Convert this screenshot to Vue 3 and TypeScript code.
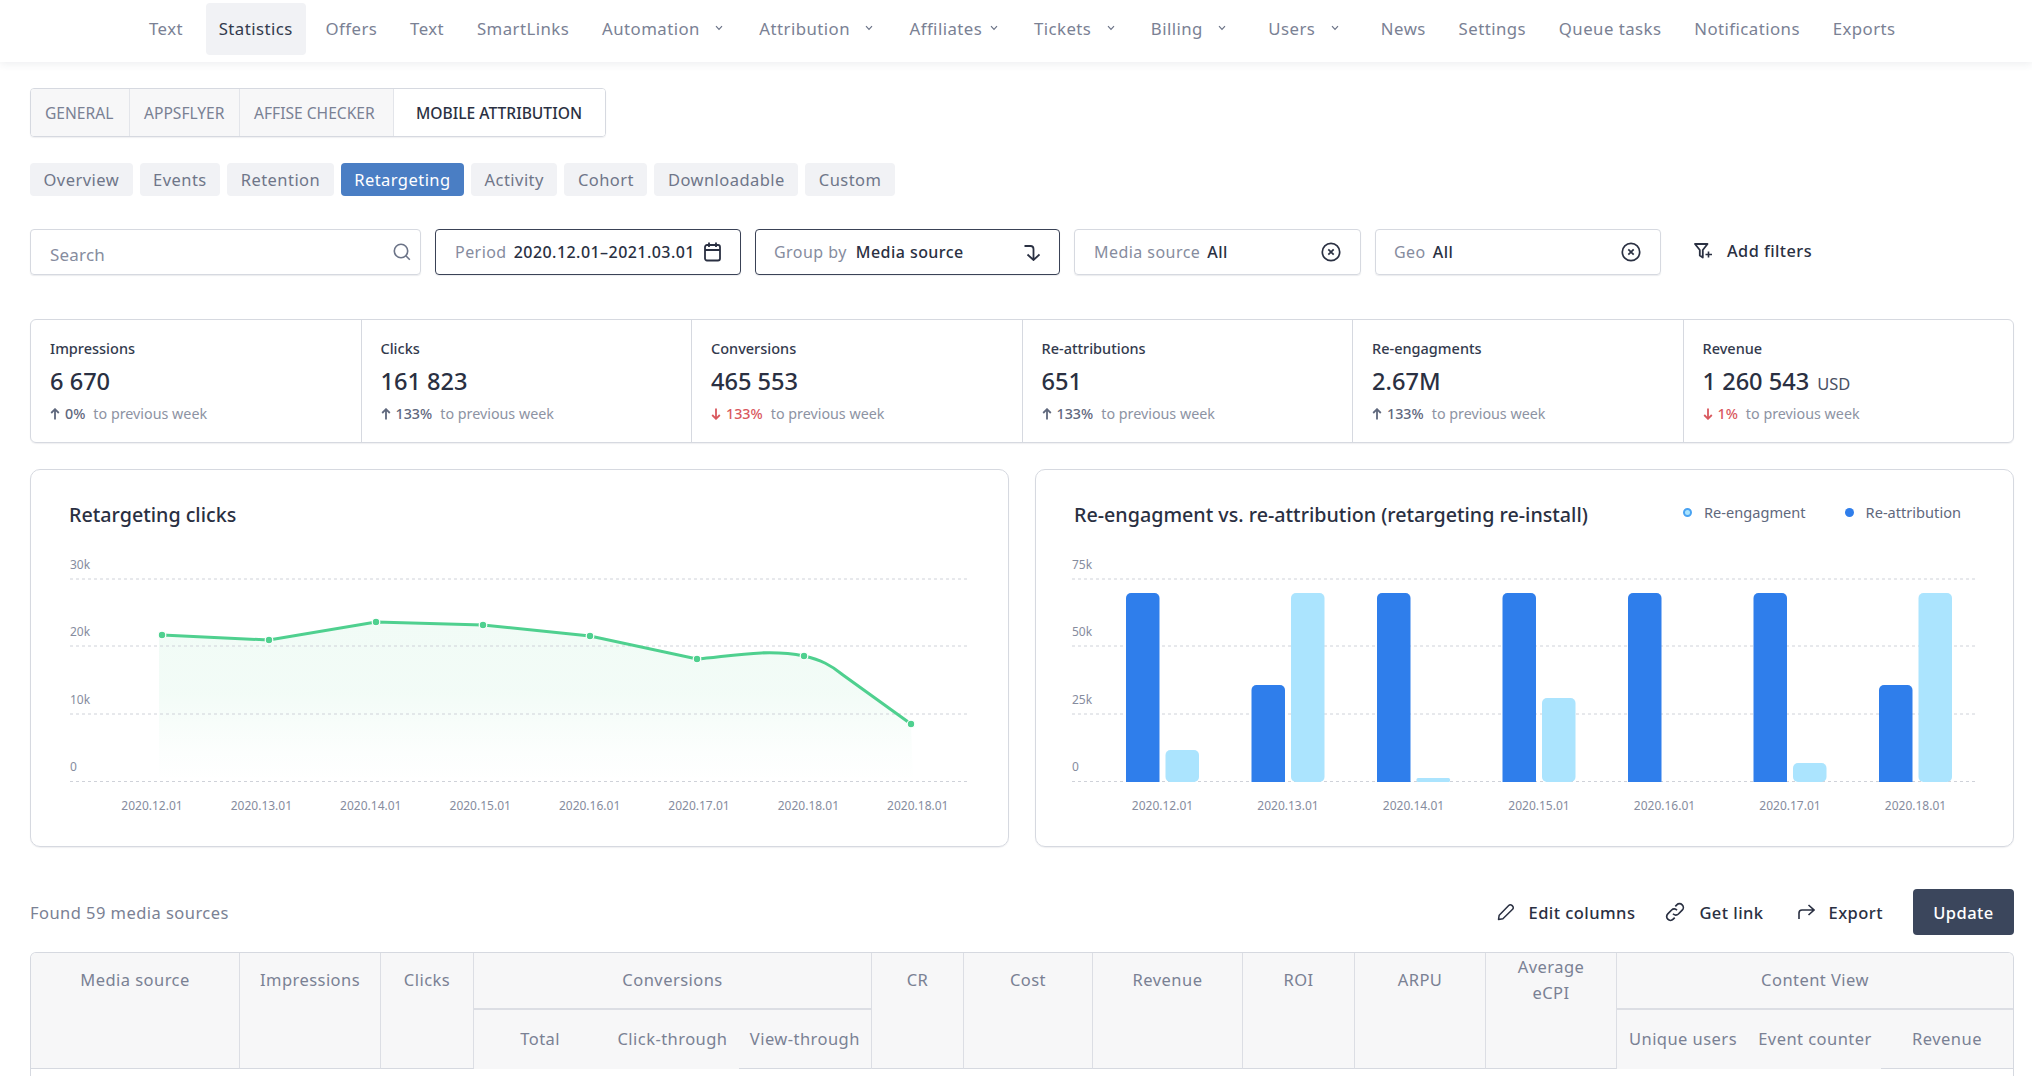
<script setup lang="ts">
interface NavItem { label: string; caret?: boolean; active?: boolean; tight?: boolean; wide?: boolean }
const nav: NavItem[] = [
  { label: 'Text' }, { label: 'Statistics', active: true }, { label: 'Offers' },
  { label: 'Text' }, { label: 'SmartLinks' }, { label: 'Automation', caret: true },
  { label: 'Attribution', caret: true }, { label: 'Affiliates', caret: true, tight: true },
  { label: 'Tickets', caret: true }, { label: 'Billing', caret: true, wide: true }, { label: 'Users', caret: true, wide: true },
  { label: 'News' }, { label: 'Settings' }, { label: 'Queue tasks' }, { label: 'Notifications' }, { label: 'Exports' },
]
const segs = ['GENERAL', 'APPSFLYER', 'AFFISE CHECKER']
const pills = ['Overview', 'Events', 'Retention', 'Retargeting', 'Activity', 'Cohort', 'Downloadable', 'Custom']
const stats = [
  { l: 'Impressions', v: '6 670', p: '0%', up: true },
  { l: 'Clicks', v: '161 823', p: '133%', up: true },
  { l: 'Conversions', v: '465 553', p: '133%', up: false },
  { l: 'Re-attributions', v: '651', p: '133%', up: true },
  { l: 'Re-engagments', v: '2.67M', p: '133%', up: true },
  { l: 'Revenue', v: '1 260 543', u: 'USD', p: '1%', up: false },
]
const lineX = [131, 238, 345, 452, 559, 666, 773, 880]
const lineY = [165, 170, 152, 155, 166, 189, 186, 254]
const gridY = [109, 176, 244, 311.5]
const lineDates = ['2020.12.01', '2020.13.01', '2020.14.01', '2020.15.01', '2020.16.01', '2020.17.01', '2020.18.01', '2020.18.01']
const linePath = 'M131 165 L238 170 L345 152 L452 155 L559 166 L666 189 C695 187 735 178 773 186 C790 190 800 195 812 205 L880 254'
const areaPath = linePath + ' L882 311 L128 311 L128 165 Z'
const bars = [
  { d: '2020.12.01', a: 189, b: 32 }, { d: '2020.13.01', a: 97, b: 189 }, { d: '2020.14.01', a: 189, b: 4 },
  { d: '2020.15.01', a: 189, b: 84 }, { d: '2020.16.01', a: 189, b: 0 }, { d: '2020.17.01', a: 189, b: 19 }, { d: '2020.18.01', a: 97, b: 189 },
]
</script>

<template>
  <div class="page">
    <header class="topbar">
      <nav class="nav">
        <a v-for="(n, i) in nav" :key="i" class="nav-item" :class="{ on: n.active, tight: n.tight, wide: n.wide }">
          {{ n.label }}
          <svg v-if="n.caret" class="caret" width="8" height="6" viewBox="0 0 8 6"><path d="M1 1.200 4 4.400 7 1.200" fill="none" stroke="#6b7387" stroke-width="1.200"/></svg>
        </a>
      </nav>
    </header>

    <main class="main">
      <div class="seg">
        <span v-for="s in segs" :key="s" class="seg-i">{{ s }}</span>
        <span class="seg-on">MOBILE ATTRIBUTION</span>
      </div>

      <div class="pills">
        <span v-for="p in pills" :key="p" class="pill" :class="{ on: p === 'Retargeting' }">{{ p }}</span>
      </div>

      <div class="filters">
        <div class="fld f-search">
          <span class="lab search-t">Search</span>
          <svg width="18" height="18" viewBox="0 0 18 18" class="ic-end"><circle cx="8" cy="8" r="6.700" fill="none" stroke="#6b7387" stroke-width="1.600"/><path d="M12.800 12.800 16.800 16.800" stroke="#6b7387" stroke-width="1.600" fill="none"/></svg>
        </div>
        <div class="fld f-dark f-period">
          <span class="lab">Period</span><span class="val">2020.12.01–2021.03.01</span>
          <svg width="17" height="20" viewBox="0 0 17 20" class="ic-end"><rect x="1" y="3" width="15" height="15.500" rx="2" fill="none" stroke="#2a3042" stroke-width="1.800"/><path d="M1 8h15M5 .5v4.500M12 .5v4.500" stroke="#2a3042" stroke-width="1.800" fill="none"/></svg>
        </div>
        <div class="fld f-dark f-group">
          <span class="lab">Group by</span><span class="val">Media source</span>
          <svg width="16" height="17" viewBox="0 0 16 17" class="ic-end"><path d="M.5 2h6a3 3 0 0 1 3 3v10.500M3.500 10.500l6 5.500 6-5.500" fill="none" stroke="#2a3042" stroke-width="1.800"/></svg>
        </div>
        <div class="fld f-media">
          <span class="lab">Media source</span><span class="val">All</span>
          <svg width="20" height="20" viewBox="0 0 20 20" class="ic-end"><circle cx="10" cy="10" r="8.700" fill="none" stroke="#2a3042" stroke-width="1.700"/><path d="M7.300 7.300l5.400 5.400M12.700 7.300l-5.400 5.400" stroke="#2a3042" stroke-width="1.700"/></svg>
        </div>
        <div class="fld f-geo">
          <span class="lab">Geo</span><span class="val">All</span>
          <svg width="20" height="20" viewBox="0 0 20 20" class="ic-end"><circle cx="10" cy="10" r="8.700" fill="none" stroke="#2a3042" stroke-width="1.700"/><path d="M7.300 7.300l5.400 5.400M12.700 7.300l-5.400 5.400" stroke="#2a3042" stroke-width="1.700"/></svg>
        </div>
        <div class="add">
          <svg width="19" height="16" viewBox="0 0 19 16"><path d="M1 1h12.500L8.800 7v7.500L5.800 12.500V7z" fill="none" stroke="#2a3042" stroke-width="1.800" stroke-linejoin="round"/><path d="M14.500 8.500v6M11.500 11.500h6.500" stroke="#2a3042" stroke-width="1.600"/></svg>
          <span>Add filters</span>
        </div>
      </div>

      <section class="stats">
        <div v-for="s in stats" :key="s.l" class="stat">
          <div class="st-l">{{ s.l }}</div>
          <div class="st-v">{{ s.v }}<span v-if="s.u" class="st-u">{{ s.u }}</span></div>
          <div class="st-d">
            <svg width="10" height="12" viewBox="0 0 10 12"><path :d="s.up ? 'M5 11.500V1.500M1.200 5 5 1.200 8.800 5' : 'M5 .5v10M1.200 7 5 10.800 8.800 7'" fill="none" :stroke="s.up ? '#5f687d' : '#d9585e'" stroke-width="1.800"/></svg>
            <b :class="{ red: !s.up }">{{ s.p }}</b><span>to previous week</span>
          </div>
        </div>
      </section>

      <section class="charts">
        <div class="card">
          <div class="card-h"><h3>Retargeting clicks</h3></div>
          <svg class="plot" width="976" height="316" viewBox="0 60 976 316">
            <defs>
              <linearGradient id="ga" x1="0" y1="0" x2="0" y2="1">
                <stop offset="0" stop-color="#4fd08f" stop-opacity=".08"/>
                <stop offset=".45" stop-color="#4fd08f" stop-opacity=".07"/>
                <stop offset=".8" stop-color="#4fd08f" stop-opacity=".02"/>
                <stop offset="1" stop-color="#4fd08f" stop-opacity="0"/>
              </linearGradient>
            </defs>
            <text v-for="(t, i) in ['30k','20k','10k','0']" :key="t" x="39" :y="gridY[i] - 10.500" class="ax">{{ t }}</text>
            <path :d="areaPath" fill="url(#ga)"/>
            <line v-for="y in gridY" :key="y" x1="39" x2="939" :y1="y" :y2="y" class="gl"/>
            <path :d="linePath" fill="none" stroke="#4fd08f" stroke-width="3"/>
            <circle v-for="(x, i) in lineX" :key="i" :cx="x" :cy="lineY[i]" r="3.800" fill="#4fd08f" stroke="#fff" stroke-width="1.200"/>
            <text v-for="(d, i) in lineDates" :key="i" :x="121 + i * 109.400" y="340" text-anchor="middle" class="ax">{{ d }}</text>
          </svg>
        </div>
        <div class="card">
          <div class="card-h">
            <h3>Re-engagment vs. re-attribution (retargeting re-install)</h3>
            <div class="legend">
              <span class="lg"><i class="dot ring"></i>Re-engagment</span>
              <span class="lg"><i class="dot"></i>Re-attribution</span>
            </div>
          </div>
          <svg class="plot" width="976" height="316" viewBox="0 60 976 316">
            <text v-for="(t, i) in ['75k','50k','25k','0']" :key="t" x="36" :y="gridY[i] - 10.500" class="ax">{{ t }}</text>
            <line v-for="y in gridY" :key="y" x1="36" x2="939" :y1="y" :y2="y" class="gl"/>
            <g v-for="(b, i) in bars" :key="i">
              <path :d="`M${90 + i * 125.500} 312 v${-b.a + 5} a5 5 0 0 1 5 -5 h23.500 a5 5 0 0 1 5 5 v${b.a - 5} z`" fill="#2f7eeb"/>
              <rect v-if="b.b" :x="129.500 + i * 125.500" :y="312 - b.b" width="33.500" :height="b.b" :rx="b.b > 10 ? 5 : 1.500" fill="#abe4fe"/>
              <text :x="126.500 + i * 125.500" y="340" text-anchor="middle" class="ax">{{ b.d }}</text>
            </g>
          </svg>
        </div>
      </section>

      <div class="toolbar">
        <span class="found">Found 59 media sources</span>
        <div class="acts">
          <span class="act act-edit">
            <svg width="18" height="18" viewBox="0 0 18 18"><path d="M1.500 16.500l.7-4.300L11.700 2.400c.9-.9 2.300-.9 3.200 0l.7.7c.9.9.9 2.300 0 3.200L5.900 15.800z" fill="none" stroke="#2a3042" stroke-width="1.500" stroke-linejoin="round"/></svg>
            Edit columns
          </span>
          <span class="act">
            <svg width="20" height="20" viewBox="0 0 20 20"><path d="M8 11.800a3.800 3.800 0 0 0 5.400.2l3.800-3.800a3.800 3.800 0 0 0-5.400-5.400L10.300 4.300M12 8.200a3.800 3.800 0 0 0-5.400-.2L2.800 11.800a3.800 3.800 0 0 0 5.400 5.400l1.500-1.500" fill="none" stroke="#2a3042" stroke-width="1.700"/></svg>
            Get link
          </span>
          <span class="act act-last">
            <svg width="17" height="16" viewBox="0 0 17 16"><path d="M1 15V9a3 3 0 0 1 3-3h11.500M10.500 1l5.500 5-5.500 5" fill="none" stroke="#2a3042" stroke-width="1.600"/></svg>
            Export
          </span>
          <button class="upd">Update</button>
        </div>
      </div>

      <div class="table">
        <div class="thead">
          <div class="th c1">Media source</div>
          <div class="th c2">Impressions</div>
          <div class="th c3">Clicks</div>
          <div class="grp c4">
            <div class="grp-t">Conversions</div>
            <div class="grp-r">
              <span>Total</span><span>Click-through</span><span>View-through</span>
            </div>
          </div>
          <div class="th c5">CR</div>
          <div class="th c6">Cost</div>
          <div class="th c7">Revenue</div>
          <div class="th c8">ROI</div>
          <div class="th c9">ARPU</div>
          <div class="th c10">Average<br>eCPI</div>
          <div class="grp c11">
            <div class="grp-t">Content View</div>
            <div class="grp-r">
              <span>Unique users</span><span>Event counter</span><span>Revenue</span>
            </div>
          </div>
        </div>
      </div>
    </main>
  </div>
</template>

<style>
html, body { margin: 0; background: #fff; overflow: hidden; }
</style>

<style scoped>
.page { width: 2032px; height: 1076px; overflow: hidden; font-family: "Noto Sans", "Open Sans", sans-serif; color: #2a3042; font-size: 16.500px; letter-spacing: .45px; background: #fff; }
.topbar { height: 62px; box-sizing: border-box; box-shadow: 0 2px 8px rgba(60, 70, 90, .09); }
.nav { display: flex; padding: 3px 0 0 136px; }
.nav-item { display: flex; align-items: center; box-sizing: border-box; padding: 0 13px 2px; height: 52px; color: #7a8194; white-space: nowrap; border-radius: 4px; margin-right: 6.800px; font-size: 16.800px; }
.nav-item:first-child { margin-right: 9.600px; }
.nav-item.on { background: #f1f2f5; color: #333a4d; }
.caret { margin-left: 15.400px; margin-right: 3.300px; }
.tight .caret { margin-left: 7.600px; }
.wide { margin-right: 12.800px; }
.main { padding: 26px 18px 0 30px; }
.seg { display: flex; width: fit-content; height: 49px; box-sizing: border-box; border: 1px solid #d6d9e0; border-radius: 4px; overflow: hidden; box-shadow: 0 1px 1px rgba(60,70,90,.08); font-size: 15.600px; letter-spacing: 0; }
.seg-i { display: flex; align-items: center; box-sizing: border-box; padding-left: 14px; background: #f7f7f8; color: #7a8194; border-right: 1px solid #e3e5ea; white-space: nowrap; }
.seg-i:nth-child(1) { width: 99px; }
.seg-i:nth-child(2) { width: 110px; }
.seg-i:nth-child(3) { width: 154px; }
.seg-on { display: flex; align-items: center; background: #fff; color: #2a3042; padding: 0 23px 0 22px; font-weight: 500; white-space: nowrap; }
.pills { display: flex; gap: 7px; margin-top: 26px; }
.pill { display: flex; align-items: center; height: 33px; padding: 0 13.500px; background: #f1f2f5; color: #6f7689; border-radius: 4px; }
.pill.on { background: #4a7ec4; color: #fff; }
.filters { display: flex; gap: 14px; margin-top: 33px; height: 46px; font-size: 16px; }
.fld { display: flex; align-items: center; box-sizing: border-box; padding: 0 19px 0 19px; border: 1px solid #d6d9e0; border-radius: 4px; box-shadow: 0 1px 1px rgba(60,70,90,.1); }
.f-dark { border-color: #3a4256; }
.f-search { width: 391px; padding-right: 9px; }
.f-period { width: 306px; }
.f-group { width: 305px; padding-left: 18px; }
.f-media { width: 287px; }
.f-geo { width: 286px; padding-left: 18px; }
.lab { color: #868c9e; margin-right: 7px; white-space: nowrap; }
.f-group .lab { margin-right: 9px; }
.search-t { padding-top: 5px; font-size: 17px; letter-spacing: .2px; }
.val { color: #2a3042; font-weight: 500; white-space: nowrap; }
.ic-end { margin-left: auto; flex: none; }
.add { display: flex; align-items: center; gap: 14px; margin-left: 19px; padding-bottom: 2px; font-weight: 500; font-size: 16.300px; }
.stats { display: flex; margin-top: 44px; height: 124px; box-sizing: border-box; border: 1px solid #d6d9e0; border-radius: 6px; box-shadow: 0 1px 1px rgba(60,70,90,.08); letter-spacing: 0; }
.stat { flex: 1; padding: 18px 19px 0; border-right: 1px solid #d6d9e0; }
.stat:last-child { border-right: 0; }
.st-l { font-size: 14.500px; line-height: 20px; color: #333a4d; font-weight: 500; }
.st-v { font-size: 23.600px; line-height: 32px; margin-top: 7px; font-weight: 500; color: #2a3042; }
.st-u { font-size: 16.500px; line-height: 1; font-weight: 400; margin-left: 8px; color: #4a5164; }
.st-d { display: flex; align-items: center; font-size: 14.300px; line-height: 20px; margin-top: 7px; color: #8d93a3; }
.st-d svg { margin-right: 5px; }
.st-d b { font-weight: 500; color: #5f687d; margin-right: 8px; }
.st-d b.red { color: #d9585e; }
.charts { display: flex; gap: 26px; margin-top: 26px; }
.card { flex: 1; height: 378px; box-sizing: border-box; border: 1px solid #d6d9e0; border-radius: 10px; box-shadow: 0 1px 1px rgba(60,70,90,.08); overflow: hidden; letter-spacing: 0; }
.card-h { display: flex; justify-content: space-between; padding: 32px 52px 0 38px; height: 60px; box-sizing: border-box; }
h3 { margin: 0; font-size: 19.700px; line-height: 26px; font-weight: 500; color: #2a3042; white-space: nowrap; }
.plot { display: block; }
.ax { font-size: 12px; fill: #868c9e; font-family: "Noto Sans", sans-serif; }
.gl { stroke: #cfd2d9; stroke-width: 1; stroke-dasharray: 3 3; }
.legend { display: flex; gap: 39px; font-size: 14.600px; color: #5f687d; }
.lg { display: flex; align-items: center; height: 20px; white-space: nowrap; }
.dot { width: 9px; height: 9px; border-radius: 50%; background: #2f7eeb; margin-right: 12px; }
.dot.ring { background: #abe4fe; border: 2px solid #4aa3f2; box-sizing: border-box; }
.toolbar { display: flex; justify-content: space-between; align-items: center; margin-top: 42px; height: 46px; }
.found { color: #7a8194; }
.acts { display: flex; align-items: center; }
.act { display: flex; align-items: center; gap: 14px; font-weight: 500; margin-right: 34px; }
.act-edit { margin-right: 30px; }
.act-last { margin-right: 30px; }
.upd { width: 101px; height: 46px; border: 0; border-radius: 4px; background: #3b465c; color: #fff; font: 500 16.500px "Noto Sans", sans-serif; letter-spacing: .45px; }
.table { height: 125px; box-sizing: border-box; margin-top: 17px; border: 1px solid #d6d9e0; border-bottom: 0; border-radius: 6px 6px 0 0; color: #7a8194; overflow: hidden; }
.thead { display: flex; height: 116px; background: #f7f7f8; }
.th { box-sizing: border-box; padding-top: 14px; line-height: 26px; text-align: center; border-right: 1px solid #dcdee4; border-bottom: 1px solid #d6d9e0; flex: none; }
.c1 { width: 209px; } .c2 { width: 141px; } .c3 { width: 93px; } .c5 { width: 92px; } .c6 { width: 129px; } .c7 { width: 150px; } .c8 { width: 112px; } .c9 { width: 131px; }
.c10 { width: 131px; padding-top: 1px; line-height: 26px; }
.grp { flex: none; box-sizing: border-box; border-right: 1px solid #dcdee4; }
.c4 { width: 398px; }
.c11 { flex: 1; border-right: 0; }
.grp-t { height: 57px; line-height: 54px; text-align: center; border-bottom: 2px solid #dcdee4; box-sizing: border-box; }
.grp-r { display: flex; height: 59px; }
.grp-r span { flex: 1; display: flex; align-items: center; justify-content: center; white-space: nowrap; box-sizing: border-box; padding-bottom: 2px; }
.grp-r span:last-child { border-bottom: 1px solid #d6d9e0; }
</style>
